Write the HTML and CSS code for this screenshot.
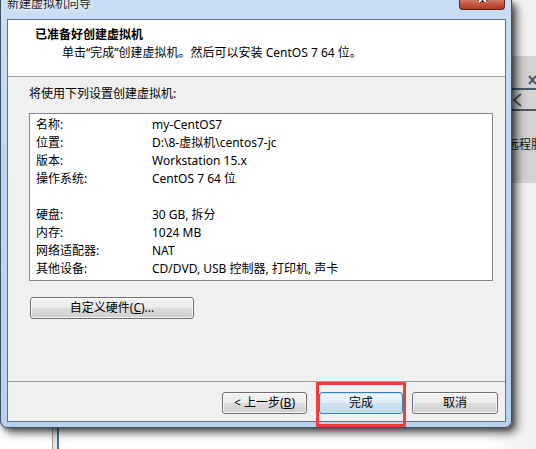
FILE: index.html
```html
<!DOCTYPE html>
<html lang="zh-CN">
<head>
<meta charset="utf-8">
<title>新建虚拟机向导</title>
<link rel="stylesheet" href="styles.css">
</head>
<body>
<div class="desktop">
  <div class="bg-panel">
    <div class="bg-line bg-line1"></div>
    <div class="bg-line bg-line2"></div>
    <svg class="bg-icons" width="24" height="60" viewBox="0 0 24 60">
      <path d="M17 20 L24 28 M24 20 L17 28" stroke="#4b5866" stroke-width="2" fill="none"/>
      <path d="M9 38 L2 44 L9 50" stroke="#4b5866" stroke-width="2" fill="none"/>
    </svg>
    <span class="bg-text">远程服</span>
  </div>
  <div class="bg-pole"></div>

  <div class="window">
    <div class="titlebar">
      <span class="title">新建虚拟机向导</span>
      <div class="close">
        <svg width="46" height="10" viewBox="0 0 46 10">
          <path d="M20 -5 L27 3 M27 -5 L20 3" stroke="#3a1a14" stroke-width="4" fill="none"/>
          <path d="M20 -5 L27 3 M27 -5 L20 3" stroke="#ffffff" stroke-width="2.2" fill="none"/>
        </svg>
      </div>
    </div>
    <div class="client">
      <div class="header">
        <div class="h-title">已准备好创建虚拟机</div>
        <div class="h-sub">单击“完成”创建虚拟机。然后可以安装 CentOS 7 64 位。</div>
      </div>
      <div class="body">
        <div class="intro">将使用下列设置创建虚拟机:</div>
        <div class="list">
          <div class="row"><span>名称:</span><span>my-CentOS7</span></div>
          <div class="row"><span>位置:</span><span>D:\8-虚拟机\centos7-jc</span></div>
          <div class="row"><span>版本:</span><span>Workstation 15.x</span></div>
          <div class="row"><span>操作系统:</span><span>CentOS 7 64 位</span></div>
          <div class="row"><span></span><span></span></div>
          <div class="row"><span>硬盘:</span><span>30 GB, 拆分</span></div>
          <div class="row"><span>内存:</span><span>1024 MB</span></div>
          <div class="row"><span>网络适配器:</span><span>NAT</span></div>
          <div class="row"><span>其他设备:</span><span>CD/DVD, USB 控制器, 打印机, 声卡</span></div>
        </div>
        <button class="btn btn-custom">自定义硬件(<u>C</u>)...</button>
      </div>
      <div class="footer">
        <button class="btn btn-back">&lt; 上一步(<u>B</u>)</button>
        <button class="btn btn-finish">完成</button>
        <button class="btn btn-cancel">取消</button>
      </div>
    </div>
  </div>

  <div class="highlight"></div>
</div>
</body>
</html>
```
FILE: styles.css
```css
* { box-sizing: border-box; }
html, body { margin: 0; padding: 0; }
body {
  width: 536px;
  height: 449px;
  overflow: hidden;
  background: #ffffff;
  font-family: "Noto Sans", "Noto Sans CJK SC", sans-serif;
  font-size: 12px;
  color: #000;
}
.desktop {
  position: relative;
  width: 536px;
  height: 449px;
  background: linear-gradient(90deg, #ffffff 0%, #ffffff 90%, #f0f0f0 100%);
}

/* background items on the desktop */
.bg-panel {
  position: absolute;
  left: 512px;
  top: 56px;
  width: 24px;
  height: 127px;
  background: #d2d2d2;
  overflow: hidden;
}
.bg-line {
  position: absolute;
  left: 0;
  width: 24px;
  height: 2px;
  background: #4b5866;
}
.bg-line1 { top: 32px; }
.bg-line2 { top: 53px; }
.bg-icons { position: absolute; left: 0; top: 0; }
.bg-text {
  position: absolute;
  left: -5px;
  top: 79px;
  font-size: 12px;
  white-space: nowrap;
  color: #111;
}
.bg-pole {
  position: absolute;
  left: 52px;
  top: 420px;
  width: 7px;
  height: 29px;
  background: #e6e6e6;
  border-left: 1px solid #9a9a9a;
  border-right: 2px solid #44758f;
}

/* window */
.window {
  position: absolute;
  left: 0;
  top: 0;
  width: 512px;
  height: 428px;
  border: 1px solid #3f5063;
  border-top: none;
  border-radius: 0 0 7px 7px;
  background: linear-gradient(180deg, #c9def4 0%, #bdd6f0 40%, #b7d2ef 100%);
  padding: 0 5px 5px 6px;
  box-shadow: 5px 5px 10px rgba(0, 0, 0, 0.6), 2px 2px 4px rgba(0, 0, 0, 0.35);
  display: flex;
  flex-direction: column;
}
.titlebar {
  height: 19px;
  display: flex;
  justify-content: space-between;
  align-items: flex-start;
}
.title {
  margin-top: -3px;
  line-height: 14px;
  color: #1a1a1a;
  text-shadow: 0 0 6px #ffffff, 0 0 3px #ffffff;
}
.close {
  width: 46px;
  height: 10px;
  margin-right: 1px;
  border: 1px solid #5a2219;
  border-top: none;
  border-radius: 0 0 4px 4px;
  background: linear-gradient(180deg, #d47a66 0%, #c6513d 50%, #b03a26 100%);
  overflow: hidden;
}
.close svg { display: block; margin: -1px 0 0 -1px; }

.client {
  flex: 1;
  border: 1px solid #66707c;
  background: #f0f0f0;
  display: flex;
  flex-direction: column;
}
.header {
  height: 57px;
  background: #ffffff;
  border-bottom: 1px solid #a0a0a0;
  padding: 7px 0 0 27px;
  line-height: 16px;
}
.h-title { font-weight: bold; }
.h-sub { margin-top: 2px; padding-left: 27px; }

.body {
  flex: 1;
  padding: 9px 0 0 21px;
  display: flex;
  flex-direction: column;
  align-items: flex-start;
}
.intro { line-height: 16px; }
.list {
  margin-top: 11px;
  width: 464px;
  height: 168px;
  background: #ffffff;
  border: 1px solid #828790;
  padding: 2px 0 2px 6px;
}
.row {
  display: grid;
  grid-template-columns: 116px 1fr;
  height: 18px;
  line-height: 18px;
  white-space: nowrap;
}

.btn {
  font: inherit;
  font-size: 12px;
  color: #000;
  height: 22px;
  padding: 0;
  line-height: 18px;
  border: 1px solid #707070;
  border-radius: 3px;
  background: linear-gradient(180deg, #f2f2f2 0%, #ebebeb 50%, #dddddd 51%, #cfcfcf 100%);
  box-shadow: inset 0 0 0 1px rgba(255, 255, 255, 0.75);
  text-align: center;
}
.btn u { text-decoration: underline; }
.btn-custom {
  margin: 16px 0 0 1px;
  width: 164px;
}

.footer {
  height: 40px;
  border-top: 1px solid #a0a0a0;
  display: flex;
  justify-content: flex-end;
  align-items: flex-start;
  padding: 10px 7px 0 0;
}
.btn-back { width: 85px; }
.btn-finish {
  width: 84px;
  margin-left: 12px;
  border-color: #3c7fb1;
  background: linear-gradient(180deg, #eef6fb 0%, #e2eef6 50%, #cfe2ee 51%, #c2dbea 100%);
  box-shadow: inset 0 0 0 1px #bfe6fb;
}
.btn-cancel { width: 86px; margin-left: 9px; }

.highlight {
  position: absolute;
  left: 316px;
  top: 382px;
  width: 90px;
  height: 45px;
  border: 3px solid #f03c3c;
}
```
